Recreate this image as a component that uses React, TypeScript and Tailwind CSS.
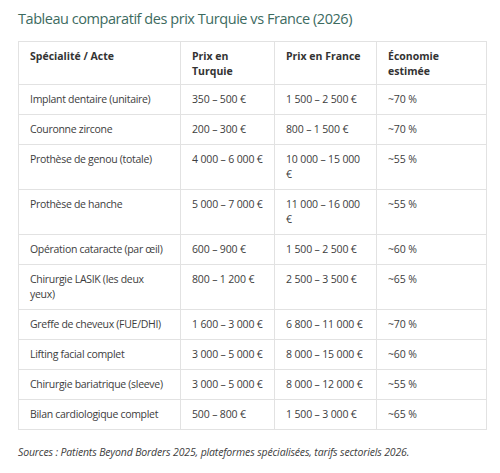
const rows = [
  ["Implant dentaire (unitaire)", "350 – 500 €", "1\u00a0500 – 2\u00a0500 €", "~70 %"],
  ["Couronne zircone", "200 – 300 €", "800 – 1\u00a0500 €", "~70 %"],
  ["Prothèse de genou (totale)", "4\u00a0000 – 6\u00a0000 €", "10\u00a0000 – 15\u00a0000 €", "~55 %"],
  ["Prothèse de hanche", "5\u00a0000 – 7\u00a0000 €", "11\u00a0000 – 16\u00a0000 €", "~55 %"],
  ["Opération cataracte (par œil)", "600 – 900 €", "1\u00a0500 – 2\u00a0500 €", "~60 %"],
  ["Chirurgie LASIK (les deux yeux)", "800 – 1\u00a0200 €", "2\u00a0500 – 3\u00a0500 €", "~65 %"],
  ["Greffe de cheveux (FUE/DHI)", "1\u00a0600 – 3\u00a0000 €", "6\u00a0800 – 11\u00a0000 €", "~70 %"],
  ["Lifting facial complet", "3\u00a0000 – 5\u00a0000 €", "8\u00a0000 – 15\u00a0000 €", "~60 %"],
  ["Chirurgie bariatrique (sleeve)", "3\u00a0000 – 5\u00a0000 €", "8\u00a0000 – 12\u00a0000 €", "~55 %"],
  ["Bilan cardiologique complet", "500 – 800 €", "1\u00a0500 – 3\u00a0000 €", "~65 %"],
];

const headers = ["Spécialité / Acte", "Prix en Turquie", "Prix en France", "Économie estimée"];

const App = () => {
  return (
    <div className="w-[500px] h-[473px] bg-white px-[18px] pt-[8px] font-['Open_Sans',sans-serif] text-[#3d3d3d]">
      {/* Titre */}
      <h2 className="text-[14.5px] leading-[22px] tracking-[-0.45px] text-[#3d6b5f] mb-[11px]">
        Tableau comparatif des prix Turquie vs France (2026)
      </h2>

      {/* Tableau */}
      <table className="table-fixed border-collapse w-[468px] text-[10.5px] leading-[15px]">
        <colgroup>
          <col className="w-[162px]" />
          <col className="w-[94px]" />
          <col className="w-[102px]" />
          <col className="w-[110px]" />
        </colgroup>
        <thead>
          <tr>
            {headers.map((h) => (
              <th
                key={h}
                className="border border-[#e2e2e2] text-left align-top font-bold text-[#333] pl-[11px] pr-[8px] pt-[7px] pb-[5px]"
              >
                {h}
              </th>
            ))}
          </tr>
        </thead>
        <tbody>
          {rows.map((r) => (
            <tr key={r[0]}>
              <td className="border border-[#e2e2e2] align-top pl-[11px] pr-[12px] py-[7px] tracking-[-0.3px]">
                {r[0]}
              </td>
              <td className="border border-[#e2e2e2] align-top pl-[11px] pr-[8px] py-[7px] tracking-[-0.15px]">
                {r[1]}
              </td>
              <td className="border border-[#e2e2e2] align-top pl-[11px] pr-[10px] py-[7px] tracking-[-0.15px]">
                {r[2]}
              </td>
              <td className="border border-[#e2e2e2] align-top pl-[11px] pr-[8px] py-[7px] tracking-[-0.15px]">
                {r[3]}
              </td>
            </tr>
          ))}
        </tbody>
      </table>

      {/* Sources */}
      <p className="mt-[15px] text-[10.5px] tracking-[-0.15px] italic text-[#3d3d3d]">
        Sources : Patients Beyond Borders 2025, plateformes spécialisées, tarifs sectoriels 2026.
      </p>
    </div>
  );
};

export default App;
